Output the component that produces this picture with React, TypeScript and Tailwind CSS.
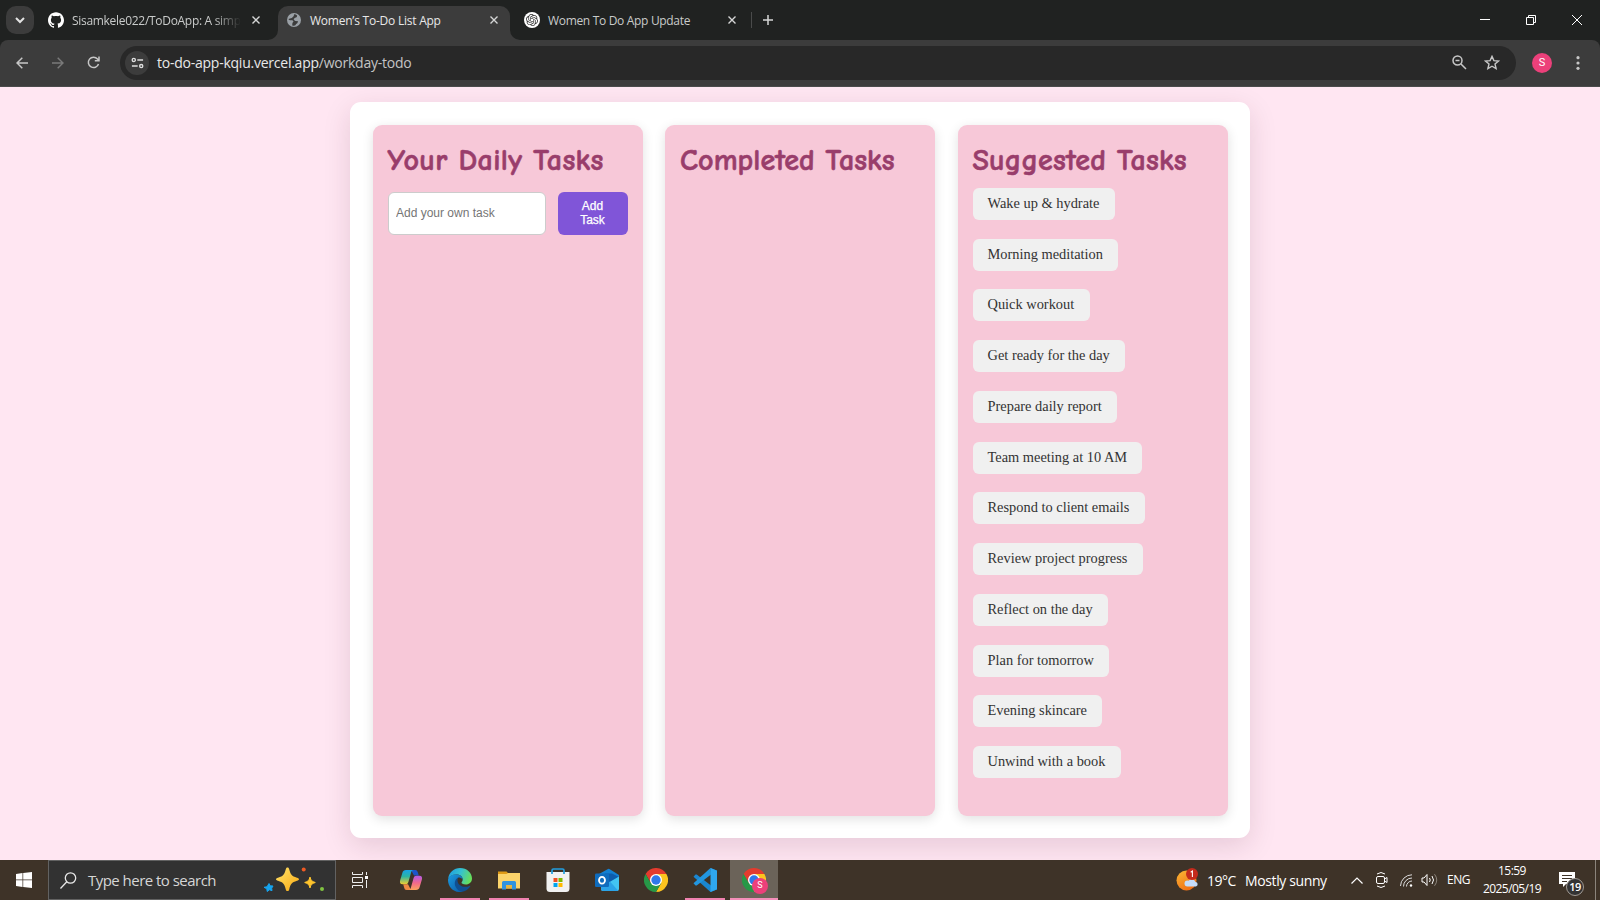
import React from "react";
import { SiGithub, SiOpenai } from "react-icons/si";

const suggested = [
  "Wake up & hydrate",
  "Morning meditation",
  "Quick workout",
  "Get ready for the day",
  "Prepare daily report",
  "Team meeting at 10 AM",
  "Respond to client emails",
  "Review project progress",
  "Reflect on the day",
  "Plan for tomorrow",
  "Evening skincare",
  "Unwind with a book",
];

function TabClose() {
  return (
    <svg width="8" height="8" viewBox="0 0 8 8" fill="none" stroke="#d5d6d6" strokeWidth="1.4">
      <path d="M.5.5l7 7M7.5.5l-7 7" />
    </svg>
  );
}

function TabStrip() {
  return (
    <div className="flex h-10 items-start bg-[#202221] pl-1.5 text-[12px] text-[#c9cbca]">
      <div className="mt-1.5 flex h-7 w-7 items-center justify-center rounded-[10px] bg-[#3c3c3c]">
        <svg width="10" height="7" viewBox="0 0 10 7" fill="none" stroke="#e3e3e3" strokeWidth="2">
          <path d="M1 1l4 4 4-4" />
        </svg>
      </div>
      <div className="flex h-10 w-[244px] items-center pl-3.5">
        <SiGithub size={16} color="#fff" className="shrink-0" />
        <span className="ml-2 w-[169px] pt-0.5 whitespace-nowrap tracking-[-0.300px] [mask-image:linear-gradient(90deg,#000_84%,transparent)]">
          Sisamkele022/ToDoApp: A simp
        </span>
        <span className="ml-[11px]"><TabClose /></span>
      </div>
      <div className="relative mt-1.5 flex h-[34px] w-[232px] items-center rounded-t-[10px] bg-[#3c3c3c] pb-[6px] pl-[9px] text-[#e8e8e8]">
        <svg className="absolute bottom-0 -left-2.5" width="10" height="10" viewBox="0 0 10 10">
          <path d="M10 0v10H0A10 10 0 0 0 10 0z" fill="#3c3c3c" />
        </svg>
        <svg className="absolute -right-2.5 bottom-0" width="10" height="10" viewBox="0 0 10 10">
          <path d="M0 0v10h10A10 10 0 0 1 0 0z" fill="#3c3c3c" />
        </svg>
        <svg width="14" height="14" viewBox="0 0 14 14">
          <circle cx="7" cy="7" r="7" fill="#9aa0a6" />
          <path d="M7.2 1.2c-.6 1 .1 1.7-.9 2.2-.9.4-.7 1.4-1.6 1.6L1.4 6c.3.9 1.3 1.2 2.6 1.2 1.5 0 2.4.3 2.4 1.4 0 .8-.9.9-1 1.7l-.2 2.1c2.2.7 3.4.2 3.6-.8.2-.9 1.2-.8 1.6-1.6l.7-1.8-2.6-.1c-.9-.1-1-1.3-1.9-1.6l1-1.6c.8-.3 2-.2 2.3-1.1l.2-1.3C9.200 1.500 8.200 1.200 7.200 1.200z" fill="#3c3c3c" />
        </svg>
        <span className="ml-[9px] w-[176px] pt-0.5 whitespace-nowrap tracking-[-0.23px]">Women’s To-Do List App</span>
        <span className="ml-1"><TabClose /></span>
      </div>
      <div className="flex h-10 w-[241px] items-center pl-3.5">
        <span className="flex h-4 w-4 shrink-0 items-center justify-center rounded-full bg-white">
          <SiOpenai size={12} color="#333" />
        </span>
        <span className="ml-2 w-[176px] pt-0.5 whitespace-nowrap tracking-[-0.320px]">Women To Do App Update</span>
        <span className="ml-1"><TabClose /></span>
      </div>
      <div className="mt-3 h-4 w-px bg-[#4a4b4b]" />
      <svg className="mt-[15px] ml-[11px]" width="10" height="10" viewBox="0 0 10 10" stroke="#d5d6d6" strokeWidth="1.500">
        <path d="M5 0v10M0 5h10" />
      </svg>
      <div className="ml-auto flex h-10 items-center gap-9 pr-[18px]">
        <svg width="10" height="10" viewBox="0 0 10 10" stroke="#fff"><path d="M0 4.500h10" /></svg>
        <svg width="10" height="10" viewBox="0 0 10 10" fill="none" stroke="#fff">
          <path d="M.5 2.500h7v7h-7zM2.500 2.500v-2h7v7h-2" />
        </svg>
        <svg width="10" height="10" viewBox="0 0 10 10" stroke="#fff"><path d="M0 0l10 10M10 0L0 10" /></svg>
      </div>
    </div>
  );
}

function Toolbar() {
  return (
    <div className="bg-[#202221]">
      <div className="flex h-[47px] items-center rounded-t-[8px] border-b border-[#4a4b4b] bg-[#3c3c3c] pb-px pl-4">
        <svg width="12" height="12" viewBox="0 0 12 12" fill="none" stroke="#c7c7c7" strokeWidth="1.500">
          <path d="M12 6H1M6.300.700L1 6l5.300 5.300" />
        </svg>
        <svg className="ml-6" width="12" height="12" viewBox="0 0 12 12" fill="none" stroke="#7a7a7a" strokeWidth="1.500">
          <path d="M0 6h11M5.700.700L11 6l-5.300 5.300" />
        </svg>
        <svg className="ml-[23px]" width="13" height="13" viewBox="0 0 13 13" fill="none" stroke="#c7c7c7" strokeWidth="1.500">
          <path d="M11.500 8A5.200 5.200 0 1 1 10.500 3L12 4.600M12 .500v4.200H7.800" />
        </svg>
        <div className="ml-5 flex h-[34px] w-[1396px] items-center rounded-full bg-[#282828] pl-[5px]">
          <div className="flex h-6 w-6 items-center justify-center rounded-full bg-[#3c3c3c]">
            <svg width="13" height="12" viewBox="0 0 14 12" fill="none" stroke="#dedede" strokeWidth="1.500">
              <circle cx="3" cy="2.700" r="1.700" />
              <path d="M6.800 2.700H13M1 9.300h6.200" />
              <circle cx="11" cy="9.300" r="1.700" />
            </svg>
          </div>
          <span className="ml-2 text-[14px] whitespace-nowrap tracking-[-0.240px] text-[#e8e8e8]">
            to-do-app-kqiu.vercel.app<span className="text-[#c4c4c4]">/workday-todo</span>
          </span>
          <svg className="ml-auto" width="15" height="15" viewBox="0 0 15 15" fill="none" stroke="#c7c7c7" strokeWidth="1.500">
            <circle cx="5.500" cy="5.500" r="4.500" />
            <path d="M9 9l5 5M3.500 5.500h4" />
          </svg>
          <svg className="mr-4 ml-[17px]" width="16" height="15" viewBox="0 0 16 15" fill="none" stroke="#c7c7c7" strokeWidth="1.400">
            <path d="M8 1.400l1.900 4.200 4.600.400-3.500 3 1.100 4.600L8 11.200l-4.100 2.400L5 9 1.500 6l4.600-.400z" />
          </svg>
        </div>
        <div className="ml-4 flex h-5 w-5 items-center justify-center rounded-full bg-[#ec407a] pt-px font-['Roboto',sans-serif] text-[11px] text-white">
          S
        </div>
        <svg className="ml-6" width="4" height="14" viewBox="0 0 4 14" fill="#c7c7c7">
          <circle cx="2" cy="1.700" r="1.600" />
          <circle cx="2" cy="7" r="1.600" />
          <circle cx="2" cy="12.300" r="1.600" />
        </svg>
      </div>
    </div>
  );
}

function Column({ title, tracking, children }: { title: string; tracking: string; children?: React.ReactNode }) {
  return (
    <section className="h-[691px] w-[270px] rounded-[9px] bg-[#f7c8d8] px-[15px] pt-[15px] shadow-[0_3px_12px_rgba(0,0,0,0.12)]">
      <h2
        className={
          "h-[38px] font-['Comic_Sans_MS','Comic_Neue','Noto_Sans',cursive] text-[30px] leading-[42px] font-bold whitespace-nowrap text-[#993d6b] [-webkit-text-stroke:0.6px_#993d6b] " +
          tracking
        }
      >
        {title}
      </h2>
      {children}
    </section>
  );
}

function TodoPage() {
  return (
    <main className="flex h-[773px] justify-center overflow-hidden bg-[#ffe6f2] pt-[15px]">
      <div className="flex h-[736px] w-[900px] justify-between rounded-[11px] bg-white px-[22.500px] pt-[23px] shadow-[0_8px_28px_rgba(60,0,40,0.130)]">
        <Column title="Your Daily Tasks" tracking="tracking-[0.320px]">
          <div className="mt-[14px] flex h-[43px] justify-between">
            <input
              placeholder="Add your own task"
              className="w-[158px] rounded-[6px] border border-[#ccc] bg-white px-[7.500px] pb-px font-['Liberation_Sans',sans-serif] text-[12px] placeholder:text-[#757575]"
            />
            <button className="w-[70px] rounded-[6px] bg-[#8055d8] px-4 pb-0.5 font-['Liberation_Sans',sans-serif] text-[12px] leading-[14px] text-white [-webkit-text-stroke:0.25px_#fff]">
              Add Task
            </button>
          </div>
        </Column>
        <Column title="Completed Tasks" tracking="tracking-[0.050px]" />
        <Column title="Suggested Tasks" tracking="tracking-[0.200px]">
          <ul className="mt-[9.900px] flex flex-col items-start gap-[18.750px] font-['Liberation_Serif',serif] text-[14.400px] text-[#333]">
            {suggested.map((t) => (
              <li key={t} className="h-8 rounded-[6px] bg-[#f0f0f0] pr-[15.300px] pl-[15px] leading-[31.900px] whitespace-nowrap">
                {t}
              </li>
            ))}
          </ul>
        </Column>
      </div>
    </main>
  );
}

function Chrome({ size = 24 }: { size?: number }) {
  return (
    <svg width={size} height={size} viewBox="0 0 24 24">
      <path d="M12 6h10.400A12 12 0 0 0 1.600 6l5.200 9z" fill="#e33b2e" />
      <path d="M17.200 15L12 24A12 12 0 0 0 22.400 6H12z" fill="#fcc31e" />
      <path d="M6.800 15L1.600 6A12 12 0 0 0 12 24l5.200-9z" fill="#279847" />
      <circle cx="12" cy="12" r="6" fill="#fff" />
      <circle cx="12" cy="12" r="4.700" fill="#2f78ea" />
    </svg>
  );
}

function Copilot() {
  return (
    <svg width="24" height="24" viewBox="0 0 24 24">
      <defs>
        <linearGradient id="cpA" x1="0" y1="0" x2="0" y2="1">
          <stop offset="0" stopColor="#17a3e8" />
          <stop offset=".45" stopColor="#2bb4a3" />
          <stop offset="1" stopColor="#f2cf2e" />
        </linearGradient>
        <linearGradient id="cpB" x1="0" y1="0" x2="0" y2="1">
          <stop offset="0" stopColor="#b25be8" />
          <stop offset=".5" stopColor="#f0688c" />
          <stop offset="1" stopColor="#fba35c" />
        </linearGradient>
      </defs>
      <path d="M12 2h4.500c1.300 0 1.900 1 2.300 2.300l1 3.200H15z" fill="#1c55c9" />
      <path d="M7 2h7.500c-1.400 0-2 1-2.500 2.800L9.400 14c-.500 1.600-1.300 2.300-3 2.300H3.500c-2.200 0-3-1.500-2.400-3.800l2.300-7.700C4 3 5 2 7 2z" fill="url(#cpA)" />
      <path d="M12 22H7.500c-1.300 0-1.900-1-2.300-2.300l-1-3.400H9z" fill="#ee8a44" />
      <path d="M17 22H9.500c1.400 0 2-1 2.500-2.800L14.600 10c.500-1.600 1.300-2.300 3-2.300h2.900c2.200 0 3 1.500 2.400 3.800l-2.300 7.700C20 21 19 22 17 22z" fill="url(#cpB)" />
    </svg>
  );
}

function Edge() {
  return (
    <svg width="24" height="24" viewBox="0 0 24 24">
      <defs>
        <linearGradient id="edA" x1="0" y1=".2" x2="1" y2=".5">
          <stop offset="0" stopColor="#1e9de0" />
          <stop offset=".5" stopColor="#35c1d0" />
          <stop offset="1" stopColor="#68df59" />
        </linearGradient>
        <linearGradient id="edB" x1="0" y1="0" x2="1" y2="1">
          <stop offset="0" stopColor="#1b9be0" />
          <stop offset="1" stopColor="#0c59a4" />
        </linearGradient>
      </defs>
      <path d="M.200 10.500C1 4.200 6 0 12 0c7 0 12 5 12 10.500 0 3.500-2.700 6-6.200 6-3 0-4.300-1-4.300-1.900 0-.800 1.200-1.300 1.200-3.200C14.700 8.500 11.800 6.500 8.300 6.500 4.500 6.500 1.500 8.200.200 10.500z" fill="url(#edA)" />
      <path d="M0 12c.200-3.500 3.800-5.500 8.300-5.500 3.500 0 6.400 2 6.400 4.900-1.200-1.400-2.700-1.900-4.200-1.900-2.700 1.500-3 5.300-1.500 8.500 1.200 2.700 3.500 4.800 5.500 5.700C6.500 25.500 0 19.500 0 12z" fill="url(#edB)" />
      <path d="M10.500 9.500C7 10.700 6 15 7.500 18.500c1.300 3 4 5 7 5.200 3.200-.600 6-2.500 7.700-5.200.300-.500-.200-.900-.700-.600-5.500 2.600-12-.400-12-5.400 0-1.200.300-2.200 1-3z" fill="#104f91" />
    </svg>
  );
}

function Explorer() {
  return (
    <svg width="22" height="20" viewBox="0 0 22 20">
      <path d="M0 1.500h8.500L10 3h12v5H0z" fill="#e09b16" />
      <path d="M0 4h8.500L10 3h12v15.500H0z" fill="#fcd46b" />
      <path d="M4 19.500v-7q0-1.500 1.500-1.500h11q1.500 0 1.500 1.500v7h-4V15H8v4.500z" fill="#3093df" />
      <path d="M8 15h6v3.500H8z" fill="#e8b53e" />
    </svg>
  );
}

function Store() {
  return (
    <svg width="24" height="24" viewBox="0 0 24 24">
      <path d="M.500 4h23v16.500q0 3.500-3.500 3.500H4Q.500 24 .500 20.500z" fill="#f1f1f1" />
      <path d="M6 6V2.500Q6 1 7.500 1h9Q18 1 18 2.500V6" fill="none" stroke="#229fe0" strokeWidth="1.700" />
      <path d="M7.500 10h4v4h-4z" fill="#f25022" />
      <path d="M12.500 10h4v4h-4z" fill="#7fba00" />
      <path d="M7.500 15h4v4h-4z" fill="#00a4ef" />
      <path d="M12.500 15h4v4h-4z" fill="#ffb900" />
    </svg>
  );
}

function Outlook() {
  return (
    <svg width="24" height="24" viewBox="0 0 24 24">
      <path d="M4 6l9-5q.700-.400 1.400 0L24 7v12H4z" fill="#1380d2" />
      <path d="M10 5.500h7L24 9l-11 7z" fill="#0d5cad" />
      <path d="M24 8.500v12.500q0 2-2 2H8q-2 0-2-2v-2z" fill="#42c5f2" />
      <path d="M6 19l9-5.500 8 9q-.500.500-1.500.500H8q-2 0-2-2z" fill="#2ba4e8" />
      <rect x="0" y="5.500" width="14" height="13.500" rx="1.300" fill="#0f6cbd" />
      <ellipse cx="7" cy="12.200" rx="3" ry="3.400" fill="none" stroke="#fff" strokeWidth="1.800" />
    </svg>
  );
}

function VsCode() {
  return (
    <svg width="24" height="24" viewBox="0 0 24 24">
      <path d="M17.500 0L24 2.500v19L17.500 24 .500 8.700l2-2.100q.600-.400 1.200 0L18 17.500v-11z" fill="#1a86d0" />
      <path d="M17.500 0L.500 15.300l2 2.100q.600.400 1.200 0L18 6.500z" fill="#2296e0" />
      <path d="M17.500 0L24 2.800v18.400L17.500 24z" fill="#2fa8f0" />
    </svg>
  );
}

function AppSlot({ children, open, active }: { children: React.ReactNode; open?: boolean; active?: boolean }) {
  return (
    <div className={"flex h-10 w-12 flex-col items-center justify-between " + (active ? "bg-[#6b6359]" : "")}>
      <div className="relative flex h-[38px] items-center pt-0.5">{children}</div>
      <div className={"h-0.5 " + (active ? "w-12 bg-[#f48fba]" : open ? "w-10 bg-[#f082b0]" : "w-10")} />
    </div>
  );
}

function Taskbar() {
  return (
    <footer className="flex h-10 items-center bg-[#3e3328] text-white">
      <svg className="ml-4 shrink-0" width="16" height="16" viewBox="0 0 16 16" fill="#fff">
        <path d="M0 2l6.500-1v6.500H0zM7.200.900L16 0v7.500H7.200zM0 8.300h6.500V15L0 14zM7.200 8.300H16V16l-8.800-1z" />
      </svg>
      <div className="ml-4 flex h-10 w-[288px] items-center border border-[#626262] bg-[#323232] pl-[11px]">
        <svg width="17" height="17" viewBox="0 0 17 17" fill="none" stroke="#e8e8e8" strokeWidth="1.300">
          <circle cx="10.500" cy="6" r="5.200" />
          <path d="M6.800 9.800L.500 16.500" />
        </svg>
        <span className="ml-[11px] whitespace-nowrap text-[15px] tracking-[-0.530px] text-[#d6d6d6]">Type here to search</span>
        <svg className="mr-[11px] ml-auto" width="60" height="26" viewBox="0 0 60 26">
          <defs>
            <linearGradient id="spk" x1="0" y1="0" x2="1" y2="1">
              <stop offset="0" stopColor="#ffe36b" />
              <stop offset="1" stopColor="#f8a912" />
            </linearGradient>
          </defs>
          <path d="M23.500.500c1 0 1.400.600 1.700 1.700 1.400 5.300 2.300 6.600 7.800 8.600 1.300.500 2 .800 2 1.500s-.700 1.100-2 1.500c-5.500 1.800-6.400 3.300-7.800 8.600-.300 1.100-.700 1.600-1.700 1.600s-1.400-.500-1.700-1.600c-1.400-5.300-2.300-6.800-7.800-8.600-1.300-.400-2-.800-2-1.500s.700-1 2-1.500c5.500-2 6.400-3.300 7.800-8.600.300-1.100.700-1.700 1.700-1.700z" fill="url(#spk)" />
          <path d="M46 10c1 3.600 1.700 4.300 5.300 5.500-3.600 1.200-4.300 2-5.300 5.500-1-3.500-1.700-4.300-5.300-5.500C44.300 14.300 45 13.600 46 10z" fill="#fdc32c" stroke="#fdc32c" />
          <path d="M5 16.500l1.200 2.300L9 19l-1.300 2.200.300 2.500-2.500-.900L3.200 24.500l-.400-2.700L0 20.300l3-.500z" fill="#16a4ee" stroke="#16a4ee" />
          <circle cx="39.700" cy="2.500" r="2" fill="#ee5a24" />
          <circle cx="58" cy="22" r="2" fill="#80c342" />
        </svg>
      </div>
      <svg className="ml-4 shrink-0" width="16" height="16" viewBox="0 0 16 16" fill="none" stroke="#eee">
        <path d="M.500 0v2.500h10V0M.500 16v-2.500h10V16M.500 5.500h10v5H.500zM14.500 0v3M14.500 8v8" />
        <path d="M13 4h3v3h-3z" fill="#fff" stroke="none" />
      </svg>
      <div className="ml-[19px] flex gap-px">
        <AppSlot><Copilot /></AppSlot>
        <AppSlot open><Edge /></AppSlot>
        <AppSlot open><Explorer /></AppSlot>
        <AppSlot><Store /></AppSlot>
        <AppSlot><Outlook /></AppSlot>
        <AppSlot><Chrome /></AppSlot>
        <AppSlot open><VsCode /></AppSlot>
        <AppSlot active>
          <Chrome />
          <span className="absolute top-[18px] left-[10px] flex h-4 w-4 items-center justify-center rounded-full bg-[#ec407a] font-['Roboto',sans-serif] text-[9px]">
            S
          </span>
        </AppSlot>
      </div>
      <div className="ml-auto flex h-10 items-center">
        <svg width="24" height="24" viewBox="0 0 24 24">
          <defs>
            <linearGradient id="sun" x1="0" y1="0" x2=".6" y2="1">
              <stop offset="0" stopColor="#fbb834" />
              <stop offset="1" stopColor="#f07016" />
            </linearGradient>
          </defs>
          <circle cx="10.500" cy="12.500" r="10" fill="url(#sun)" />
          <path d="M11.500 18.500a3 3 0 0 1 0-6q.500 0 1 .200a4 4 0 0 1 7 1.300 2.300 2.300 0 0 1 .500 4.500z" fill="#c4dcfa" />
          <circle cx="16" cy="6" r="6" fill="#c42b1c" />
          <path d="M14.700 4.300l1.700-1.200v6" fill="none" stroke="#fff" strokeWidth="1.100" />
        </svg>
        <span className="ml-[7px] w-[38px] whitespace-nowrap text-[14px] tracking-[-0.500px]">19°C</span>
        <span className="w-[84px] whitespace-nowrap text-[14px] tracking-[-0.380px]">Mostly sunny</span>
        <svg className="ml-[22px]" width="12" height="7" viewBox="0 0 12 7" fill="none" stroke="#fff" strokeWidth="1.200">
          <path d="M.500 6.500L6 1l5.500 5.500" />
        </svg>
        <svg className="ml-[13px]" width="12" height="16" viewBox="0 0 12 16" fill="none" stroke="#fff">
          <rect x=".500" y="4.500" width="8" height="7" rx="1.500" />
          <path d="M8.500 7l2.500-1.500v5L8.500 9M1 2q4-3 8 0M1 14q4 3 8 0" />
        </svg>
        <svg className="ml-[12px]" width="13" height="13" viewBox="0 0 13 13" fill="none" stroke="#ddd">
          <path d="M.500 12A11.500 11.500 0 0 1 12 .800M3.500 12.500A8.500 8.500 0 0 1 12 4M6.500 12.500A5.500 5.500 0 0 1 12 7" />
          <circle cx="11" cy="11.500" r="1.200" fill="#fff" stroke="none" />
        </svg>
        <svg className="ml-2" width="17" height="14" viewBox="0 0 17 14" fill="none" stroke="#fff">
          <path d="M1 5h2l3-3.500v11L3 9H1zM8.500 5q1.500 2 0 4M11 3q3 4 0 8" />
          <path d="M13.500 1.200q4.500 5.800 0 11.600" stroke="#8b847b" />
        </svg>
        <span className="ml-[9px] w-[25px] whitespace-nowrap text-[12px] tracking-[-0.500px]">ENG</span>
        <div className="ml-[10px] flex h-10 w-[60px] flex-col items-center text-[12px] leading-[18px] tracking-[-0.550px]">
          <span className="mt-[2px]">15:59</span>
          <span className="whitespace-nowrap">2025/05/19</span>
        </div>
        <div className="relative ml-[17px] h-10 w-9">
          <svg className="mt-3" width="16" height="16" viewBox="0 0 16 16">
            <path d="M0 0h16v12H7l-3 3v-3H0z" fill="#fff" />
            <path d="M3 3.500h10M3 6.500h10M3 9.500h5" stroke="#3e3328" />
          </svg>
          <span className="absolute top-[18px] left-[7px] flex h-[18px] w-[18px] items-center justify-center rounded-full border border-[#a19b95] bg-[#333] text-[11px] font-semibold tracking-[-0.500px]">
            19
          </span>
        </div>
        <div className="mr-1 h-10 w-px bg-[#8b847c]" />
      </div>
    </footer>
  );
}

export default function App() {
  return (
    <div className="flex h-[900px] w-[1600px] flex-col overflow-hidden font-['Segoe_UI','Open_Sans',sans-serif]">
      <TabStrip />
      <Toolbar />
      <TodoPage />
      <Taskbar />
    </div>
  );
}
